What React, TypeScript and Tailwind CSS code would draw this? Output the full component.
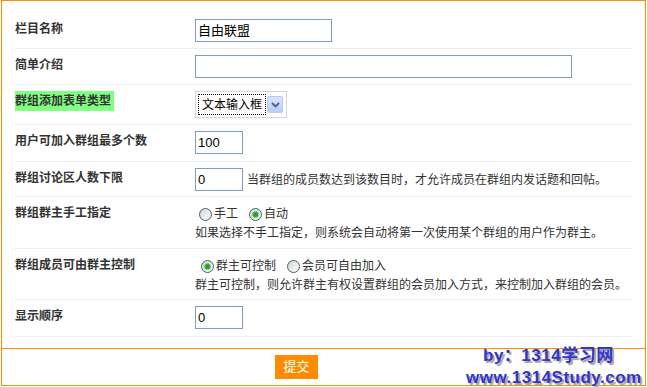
const font = "font-['Liberation_Sans','Noto_Sans_CJK_SC',sans-serif]"

function Radio({ checked }: { checked?: boolean }) {
  return (
    <span className="inline-flex h-[13px] w-[13px] shrink-0 items-center justify-center rounded-full border border-[#3b5f80] bg-linear-to-br from-[#d6d6ce] to-white">
      {checked && <span className="h-[5px] w-[5px] rounded-full bg-[#2aa22a] ring-1 ring-[#7fcf7f]" />}
    </span>
  )
}

function Row({ label, height, highlight, children }: { label: string; height: string; highlight?: boolean; children: React.ReactNode }) {
  return (
    <div className={`grid grid-cols-[181px_1fr] border-b border-[#efefef] ${height}`}>
      <div className="pt-[6px] pl-px">
        <span className={`inline-block leading-[20px] font-bold text-[#333] ${highlight ? "bg-[#80ff80] pr-[3px]" : ""}`}>{label}</span>
      </div>
      <div className="pt-[6px]">{children}</div>
    </div>
  )
}

function TextInput({ value, width }: { value: string; width: string }) {
  return (
    <div className={`flex h-[23px] shrink-0 items-center border border-[#7f9db9] bg-white px-[2px] text-[13px] text-black ${width}`}>
      {value}
    </div>
  )
}

export default function App() {
  return (
    <div className={`relative h-[387px] w-[647px] bg-white text-[12px] ${font}`}>
      {/* Form panel */}
      <div className="ml-px w-[645px] border border-[#ff8c00] pt-[12px] pb-[11px]">
        <div className="mx-[12px]">
          <Row label="栏目名称" height="h-[36px]">
            <TextInput value="自由联盟" width="w-[137px]" />
          </Row>
          <Row label="简单介绍" height="h-[36px]">
            <TextInput value="" width="w-[377px]" />
          </Row>
          <Row label="群组添加表单类型" height="h-[40px]" highlight>
            <div className="flex h-[27px] w-[92px] items-center border border-[#d4d4d4] bg-white pl-[2px]">
              <span className="flex h-[21px] w-[68px] shrink-0 items-center border border-dotted border-black pl-[3px] text-[12px] whitespace-nowrap text-black">
                文本输入框
              </span>
              <span className="ml-[1px] flex h-[17px] w-[16px] shrink-0 items-center justify-center rounded-[2px] border border-[#b7c8f2] bg-linear-to-b from-[#dbe5ff] to-[#b7cafa]">
                <svg width="9" height="6" viewBox="0 0 9 6">
                  <path d="M1 1l3.5 3.5L8 1" fill="none" stroke="#4d6185" strokeWidth="1.8" />
                </svg>
              </span>
            </div>
          </Row>
          <Row label="用户可加入群组最多个数" height="h-[37px]">
            <TextInput value="100" width="w-[48px]" />
          </Row>
          <Row label="群组讨论区人数下限" height="h-[35px]">
            <div className="flex items-center gap-[4px]">
              <TextInput value="0" width="w-[48px]" />
              <span className="text-[#333]">当群组的成员数达到该数目时，才允许成员在群组内发话题和回帖。</span>
            </div>
          </Row>
          <Row label="群组群主手工指定" height="h-[52px]">
            <div className="flex h-[22px] items-center pl-[4px] text-[#333]">
              <Radio />
              <span className="ml-[2px]">手工</span>
              <span className="ml-[11px]" />
              <Radio checked />
              <span className="ml-[2px]">自动</span>
            </div>
            <div className="leading-[16px] text-[#333]">如果选择不手工指定，则系统会自动将第一次使用某个群组的用户作为群主。</div>
          </Row>
          <Row label="群组成员可由群主控制" height="h-[51px]">
            <div className="flex h-[22px] items-center pl-[6px] text-[#333]">
              <Radio checked />
              <span className="ml-[2px]">群主可控制</span>
              <span className="ml-[11px]" />
              <Radio />
              <span className="ml-[2px]">会员可自由加入</span>
            </div>
            <div className="leading-[16px] text-[#333]">群主可控制，则允许群主有权设置群组的会员加入方式，来控制加入群组的会员。</div>
          </Row>
          <Row label="显示顺序" height="h-[37px]">
            <TextInput value="0" width="w-[48px]" />
          </Row>
        </div>
      </div>

      {/* Footer */}
      <div className="ml-px flex h-[37px] w-[645px] items-start border-x border-b border-[#ff8c00] pt-[6px] pl-[273px]">
        <button className="h-[24px] w-[43px] bg-[#ff8c00] text-[13px] text-white">提交</button>
      </div>

      {/* Watermark */}
      <div className="pointer-events-none absolute top-[345px] left-[466px] font-['Liberation_Sans',sans-serif] text-[17px] leading-[22px] font-bold tracking-[0.5px] text-[#3434cc] [text-shadow:2px_2px_1px_#a0a0a0]">
        <div className="ml-[17px] font-['Liberation_Sans','Noto_Sans_CJK_SC',sans-serif]">by：1314学习网</div>
        <div>www.1314Study.com</div>
      </div>
    </div>
  )
}
